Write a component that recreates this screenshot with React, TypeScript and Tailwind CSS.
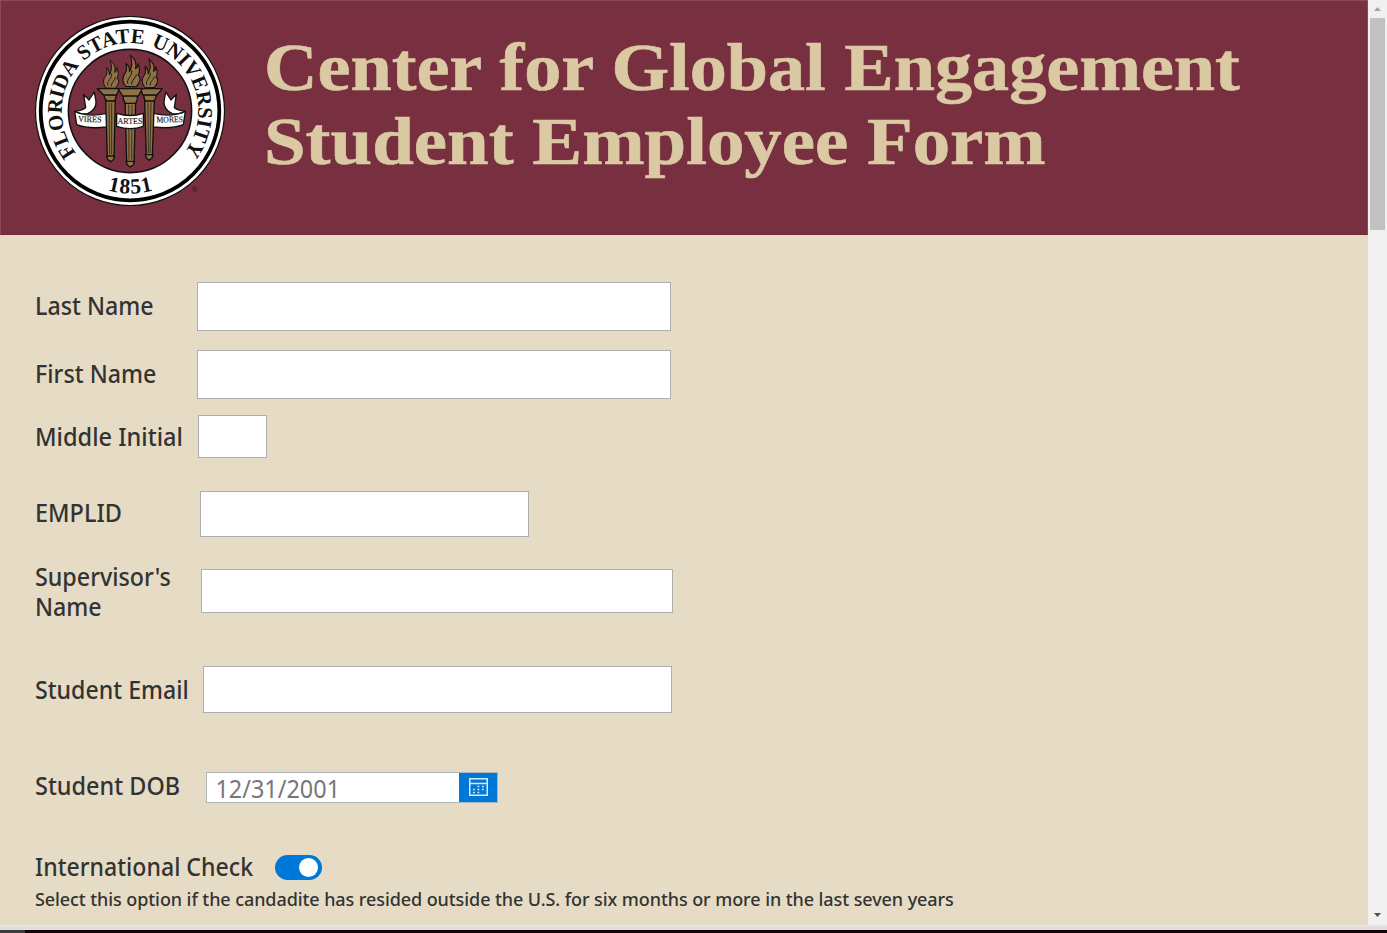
import React from "react";

function Flame({ x, y, s = 1 }: { x: number; y: number; s?: number }) {
  return (
    <g transform={`translate(${x} ${y}) scale(${s})`} fill="#8f7143" stroke="#111" strokeWidth="3" strokeLinejoin="round">
      <path d="M8 86 C-3 72 0 59 7 50 C13 41 10 32 9 25 C17 32 19 40 18 47 C25 34 27 20 20 3 C35 14 37 27 34 39 C39 37 41 31 40 25 C47 38 45 49 41 57 C50 60 46 76 36 87 Z" />
      <path d="M14 79 C8 66 28 58 24 43 M24 81 C22 70 37 62 36 54" fill="none" strokeWidth="2.5" />
    </g>
  );
}

function Seal() {
  return (
    <svg viewBox="0 0 190 190" className="block h-[190px] w-[190px] shrink-0" role="img">
      <defs>
        <path id="motto-ring" d="M41.2 137.2 A68.2 68.2 0 1 1 148.8 137.2" />
        <path id="year-ring" d="M64 171.5 A82.5 82.5 0 0 0 126 171.5" />
      </defs>
      <circle cx="95" cy="95" r="94.5" fill="#fff" stroke="#111" strokeWidth="1.2" />
      <circle cx="95" cy="95" r="89.3" fill="#fff" stroke="#000" strokeWidth="3.8" />
      <circle cx="95" cy="95" r="61.6" fill="#782f40" stroke="#111" strokeWidth="1.6" />
      <g fill="#111" fontFamily="'Liberation Serif', serif" fontWeight="700">
        <text fontSize="21" wordSpacing="2">
          <textPath href="#motto-ring" textLength="303" lengthAdjust="spacingAndGlyphs">FLORIDA STATE UNIVERSITY</textPath>
        </text>
        <text fontSize="21.5">
          <textPath href="#year-ring" startOffset="9" textLength="46">1851</textPath>
        </text>
      </g>
      <g transform="translate(35 29) scale(.33333)" strokeLinejoin="round">
        <Flame x={100} y={43} />
        <Flame x={158} y={27} s={1.13} />
        <Flame x={216} y={39} s={1.02} />
        <g fill="#fff" stroke="#111" strokeWidth="4">
          <path d="M14 199 C26 198 36 196 47 188 L41 148 L57 165 L73 141 L78 170 C79 187 67 199 53 206 L34 207 Z" />
          <path d="M346 199 C334 198 324 196 313 188 L319 148 L303 165 L287 141 L282 170 C281 187 293 199 307 206 L326 207 Z" />
          <path d="M14 199 Q54 218 110 205 V246 Q55 253 20 239 Z" />
          <path d="M346 199 Q306 218 250 205 V246 Q305 253 340 239 Z" />
        </g>
        <g fill="#8f7143" stroke="#111" strokeWidth="4">
          <path d="M107 167 H136 L132 335 H112 Z" />
          <path d="M110 333 H134 L130 344 L122 350 L113 344 Z" />
          <path d="M224 167 H253 L247 333 H229 Z" />
          <path d="M226 329 H249 L246 339 L238 346 L229 339 Z" />
          <path d="M165 170 H197 L192 350 H170 Z" />
          <path d="M168 349 H193 L190 360 L181 366 L172 360 Z" />
          <path d="M103 149 H138 V158 L133 168 H110 L103 158 Z" />
          <path d="M222 149 H258 V158 L252 168 H226 L222 158 Z" />
          <path d="M82 131 H148 L140 150 H101 Z" />
          <path d="M212 131 H277 L261 150 H218 Z" />
          <path d="M160 150 H202 V164 L197 175 H166 L160 164 Z" />
          <path d="M144 131 H217 L205 153 H158 Z" />
        </g>
        <path
          d="M117 173 L119 328 M125 173 V328 M234 173 L235 324 M243 173 L240 324 M176 179 L177 344 M186 179 L185 344"
          fill="none"
          stroke="#111"
          strokeWidth="2"
        />
        <path d="M140 205 Q181 218 220 205 V244 Q181 258 140 244 Z" fill="#fff" stroke="#111" strokeWidth="4" />
      </g>
      <g fill="#222" fontFamily="'Liberation Serif', serif" fontSize="8.6" stroke="#222" strokeWidth=".15">
        <text x="43" y="106" transform="rotate(2 55 106)" textLength="23.5" lengthAdjust="spacingAndGlyphs">VIRES</text>
        <text x="82.5" y="107.6" textLength="25" lengthAdjust="spacingAndGlyphs">ARTES</text>
        <text x="121.5" y="106.3" transform="rotate(-1 135 106)" textLength="26.5" lengthAdjust="spacingAndGlyphs">MORES</text>
      </g>
      <text x="157" y="175.5" fontSize="7" fill="#2b1018" fontFamily="'Liberation Sans', sans-serif">®</text>
    </svg>
  );
}

function CalendarIcon() {
  return (
    <svg viewBox="0 0 19 18" className="mb-[2px] h-[18px] w-[19px]" fill="none" stroke="#d9ebfa">
      <path d="M.75 .75 H18.25 V17.25 H.75 Z M.75 5.5 H18.25" strokeWidth="1.5" />
      <path d="M8.5 8.5 h1.8 M13 8.5 h1.8 M4 11.5 h1.8 M8.5 11.5 h1.8 M13 11.5 h1.8 M4 14.5 h1.8 M8.5 14.5 h1.8" strokeWidth="1.7" />
    </svg>
  );
}

function Label({ children, className = "scale-x-[.93]" }: { children: React.ReactNode; className?: string }) {
  return (
    <label
      className={`block origin-left whitespace-nowrap pb-[2px] font-['Noto_Sans','Open_Sans',sans-serif] text-[25px] font-medium leading-[30px] text-[#333] ${className}`}
    >
      {children}
    </label>
  );
}

const box = "block h-full shrink-0 border border-[#afafb2] bg-white outline-none";

export default function App() {
  return (
    <div className="flex h-[933px] w-[1387px] flex-col overflow-hidden bg-[#e6dcc5]">
      <div className="flex h-[925px]">
        <div className="flex w-[1368px] flex-col">
          <header className="flex h-[235px] shrink-0 border border-[#8b4a55] border-b-[#6f2b3a] bg-[#782f40] pl-[34px] pt-[15px]">
            <Seal />
            <h1 className="ml-[39px] mt-[14px] font-['Liberation_Serif',serif] text-[67px] font-bold leading-[74px] text-[#dac9a3] [-webkit-text-stroke:0.6px_#dac9a3]">
              <span className="block origin-left scale-x-[1.107] whitespace-nowrap">Center for Global Engagement</span>
              <span className="block origin-left scale-x-[1.117] whitespace-nowrap">Student Employee Form</span>
            </h1>
          </header>
          <main className="flex flex-col pl-[35px] pt-[47px]">
            <div className="flex h-[49px] items-center">
              <div className="w-[162px] pb-[2px]"><Label>Last Name</Label></div>
              <input className={`${box} w-[474px]`} />
            </div>
            <div className="mt-[19px] flex h-[49px] items-center">
              <div className="w-[162px] pb-[2px]"><Label>First Name</Label></div>
              <input className={`${box} w-[474px]`} />
            </div>
            <div className="mt-[16px] flex h-[43px] items-center">
              <div className="w-[163px]"><Label className="scale-x-[.942]">Middle Initial</Label></div>
              <input className={`${box} w-[69px]`} />
            </div>
            <div className="mt-[33px] flex h-[46px] items-center">
              <div className="w-[165px] pb-[2px]"><Label className="scale-x-[.938]">EMPLID</Label></div>
              <input className={`${box} w-[329px]`} />
            </div>
            <div className="mt-[32px] flex h-[44px] items-center">
              <div className="w-[166px] pt-[2px]"><Label>Supervisor's<br />Name</Label></div>
              <input className={`${box} w-[472px]`} />
            </div>
            <div className="mt-[53px] flex h-[47px] items-center">
              <div className="w-[168px]"><Label className="scale-x-[.926]">Student Email</Label></div>
              <input className={`${box} w-[469px]`} />
            </div>
            <div className="mt-[59px] flex h-[31px] items-center">
              <div className="w-[171px] pb-[4px]"><Label className="scale-x-[.937]">Student DOB</Label></div>
              <div className="flex h-[31px] w-[292px] border border-[#afb5bc] bg-white">
                <span className="block flex-1 origin-left scale-x-[.937] whitespace-nowrap pl-[9px] font-['Noto_Sans',sans-serif] text-[25px] leading-[30px] text-[#777]">12/31/2001</span>
                <button className="flex w-[38px] items-center justify-center bg-[#0078d7]"><CalendarIcon /></button>
              </div>
            </div>
            <div className="mt-[52px] flex h-[25px] items-center">
              <div className="w-[240px] pb-[2px]"><Label className="scale-x-[.924]">International Check</Label></div>
              <button className="flex h-[25px] w-[47px] items-center justify-end rounded-full bg-[#0078d7] pr-[4px]">
                <span className="h-[19px] w-[19px] rounded-full bg-white" />
              </button>
            </div>
            <p className="mt-[6px] whitespace-nowrap font-['Noto_Sans','Open_Sans',sans-serif] text-[18px] font-medium leading-[26px] tracking-[-0.083px] text-[#333]">
              Select this option if the candadite has resided outside the U.S. for six months or more in the last seven years
            </p>
          </main>
        </div>
        <div className="flex w-[19px] flex-col items-center justify-between bg-[#f0f0f0] pb-[8px] pt-[7px]">
          <div className="flex flex-col items-center">
            <svg viewBox="0 0 7 4" className="h-[4px] w-[7px]"><path d="M0 4 L3.5 0 L7 4 Z" fill="#a3a3a3" /></svg>
            <div className="mt-[7px] h-[212px] w-[15px] bg-[#c1c1c1]" />
          </div>
          <svg viewBox="0 0 7 4" className="h-[4px] w-[7px]"><path d="M0 0 L3.5 4 L7 0 Z" fill="#505050" /></svg>
        </div>
      </div>
      <div className="h-[5px] border-t border-[#eee8dc] bg-[#dfdfdf]" />
      <div className="flex h-[3px] bg-[#110508]"><div className="w-[25px] bg-[#3a3a3c]" /></div>
    </div>
  );
}
